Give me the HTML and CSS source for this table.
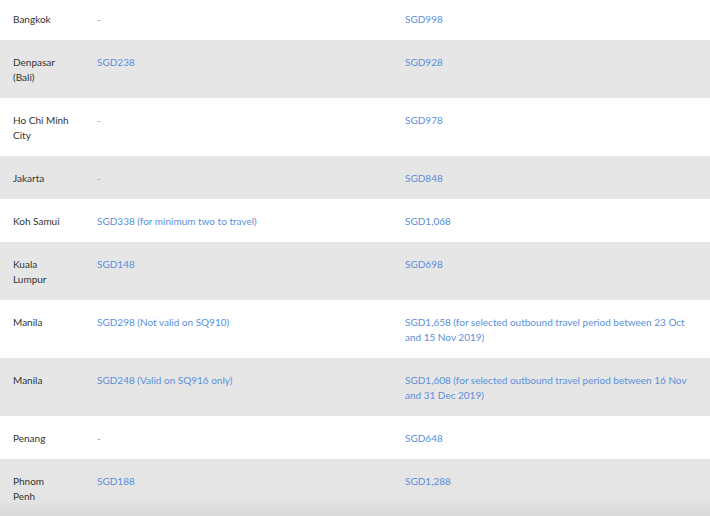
FILE: index.html
```html
<!DOCTYPE html>
<html lang="en">
<head>
<meta charset="utf-8">
<link rel="stylesheet" href="styles.css">
</head>
<body>
<table class="fares">
  <tbody>
    <tr class="first"><td class="city">Bangkok</td><td class="dash">-</td><td class="price">SGD998</td></tr>
    <tr><td class="city">Denpasar<br>(Bali)</td><td class="price">SGD238</td><td class="price">SGD928</td></tr>
    <tr><td class="city">Ho Chi Minh<br>City</td><td class="dash">-</td><td class="price">SGD978</td></tr>
    <tr><td class="city">Jakarta</td><td class="dash">-</td><td class="price">SGD848</td></tr>
    <tr><td class="city">Koh Samui</td><td class="price">SGD338 (for minimum two to travel)</td><td class="price">SGD1,068</td></tr>
    <tr><td class="city">Kuala<br>Lumpur</td><td class="price">SGD148</td><td class="price">SGD698</td></tr>
    <tr><td class="city">Manila</td><td class="price">SGD298 (Not valid on SQ910)</td><td class="price">SGD1,658 (for selected outbound travel period between 23 Oct<br>and 15 Nov 2019)</td></tr>
    <tr><td class="city">Manila</td><td class="price">SGD248 (Valid on SQ916 only)</td><td class="price">SGD1,608 (for selected outbound travel period between 16 Nov<br>and 31 Dec 2019)</td></tr>
    <tr><td class="city">Penang</td><td class="dash">-</td><td class="price">SGD648</td></tr>
    <tr class="last"><td class="city">Phnom<br>Penh</td><td class="price">SGD188</td><td class="price">SGD1,288</td></tr>
  </tbody>
</table>
</body>
</html>
```
FILE: styles.css
```css
html, body {
  margin: 0;
  padding: 0;
  background: #ffffff;
  overflow: hidden;
}
body {
  font-family: "Lato", "Liberation Sans", sans-serif;
  font-size: 10px;
  color: #333333;
}
.fares {
  width: 710px;
  border-collapse: collapse;
  table-layout: fixed;
  margin-top: -3px;
}
.fares td {
  vertical-align: top;
  padding: 15px 10px 13px 0;
  line-height: 15px;
}
.fares td.city {
  width: 74px;
  padding-left: 13px;
}
.fares td:nth-child(2) {
  width: 298px;
}
.fares tr:nth-child(even) {
  background: #e6e6e6;
}
.fares tr.last {
  background: linear-gradient(#e6e6e6 0%, #e4e4e4 70%, #d9d9d9 100%);
}
.price {
  color: #5a8fdc;
}
.dash {
  color: #9a9a9a;
}
```
